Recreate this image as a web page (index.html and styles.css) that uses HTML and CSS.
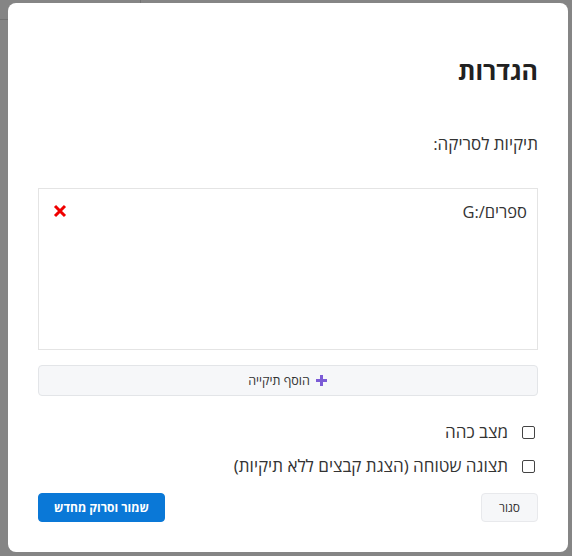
FILE: index.html
```html
<!DOCTYPE html>
<html lang="he" dir="rtl">
<head>
<meta charset="utf-8">
<link rel="stylesheet" href="styles.css">
</head>
<body>
<div class="backdrop">
  <div class="bg-line-h"></div>
  <div class="bg-line-v"></div>
  <div class="modal">
    <h1 class="title">הגדרות</h1>
    <div class="label">תיקיות לסריקה:</div>
    <div class="folder-box">
      <div class="folder-row">
        <span class="folder-name" dir="ltr">G:/ספרים</span>
        <button class="remove" aria-label="הסר">
          <svg width="14" height="14" viewBox="0 0 14 14"><path d="M2 2 L12 12 M12 2 L2 12" stroke="#f00000" stroke-width="3" stroke-linecap="butt"/></svg>
        </button>
      </div>
    </div>
    <button class="add-btn">
      <svg width="13" height="13" viewBox="0 0 13 13"><path d="M6.5 1 V12 M1 6.5 H12" stroke="#7b5bd6" stroke-width="3"/></svg>
      <span>הוסף תיקייה</span>
    </button>
    <label class="check"><span class="box"></span><span>מצב כהה</span></label>
    <label class="check"><span class="box"></span><span>תצוגה שטוחה (הצגת קבצים ללא תיקיות)</span></label>
    <div class="footer">
      <button class="btn btn-light">סגור</button>
      <button class="btn btn-primary">שמור וסרוק מחדש</button>
    </div>
  </div>
</div>
</body>
</html>
```
FILE: styles.css
```css
* { box-sizing: border-box; }
html, body { margin: 0; padding: 0; }
body {
  width: 572px;
  height: 556px;
  overflow: hidden;
  background: #858585;
  font-family: "Open Sans", "Noto Sans", "DejaVu Sans", sans-serif;
}
.backdrop {
  position: relative;
  height: 556px;
  padding: 3px 4px 0 8px;
  display: flex;
  justify-content: flex-start;
  direction: ltr;
}
.bg-line-h {
  position: absolute;
  left: 0; top: 19px;
  width: 8px; height: 1px;
  background: #737373;
}
.bg-line-v {
  position: absolute;
  left: 140px; top: 0;
  width: 1px; height: 3px;
  background: #737373;
}
.modal {
  direction: rtl;
  width: 560px;
  height: 549px;
  background: #fff;
  border-radius: 8px;
  padding: 30px 30px 30px 30px;
  display: flex;
  flex-direction: column;
}
.title {
  margin: 0;
  font-size: 25px;
  font-weight: 700;
  color: #212121;
  line-height: 30px;
  margin-top: 22px;
}
.label {
  margin-top: 47px;
  font-size: 17px;
  color: #333;
  line-height: 24px;
}
.folder-box {
  margin-top: 32px;
  height: 162px;
  border: 1px solid #e4e4e4;
  padding: 10px 10px 0 14px;
}
.folder-row {
  display: flex;
  justify-content: space-between;
  align-items: center;
  height: 24px;
}
.folder-name {
  font-size: 16.5px;
  color: #333;
}
.remove {
  border: 0;
  background: none;
  padding: 0;
  display: flex;
}
.add-btn {
  margin-top: 15px;
  height: 31px;
  border: 1px solid #e3e5e8;
  border-radius: 4px;
  background: #f6f7f9;
  display: flex;
  align-items: center;
  justify-content: center;
  gap: 5px;
  font-family: inherit;
  font-size: 12.5px;
  color: #333;
}
.check {
  display: flex;
  align-items: center;
  gap: 14px;
  font-size: 17px;
  color: #333;
  line-height: 22px;
  margin-right: 3px;
}
.check:first-of-type { margin-top: 25px; }
.check + .check { margin-top: 12px; }
.box {
  flex: none;
  width: 13px;
  height: 13px;
  border: 1px solid #444;
  border-radius: 2px;
  background: #fff;
}
.footer {
  margin-top: auto;
  display: flex;
  justify-content: space-between;
}
.btn {
  height: 29px;
  border-radius: 4px;
  font-family: inherit;
  font-size: 12px;
  padding: 0;
  white-space: nowrap;
}
.btn-light {
  background: #f6f7f9;
  border: 1px solid #e8e9ec;
  color: #333;
  width: 57px;
}
.btn-primary {
  background: #0a78d7;
  border: 1px solid #0a78d7;
  color: #fff;
  font-weight: 700;
  width: 127px;
}
```
